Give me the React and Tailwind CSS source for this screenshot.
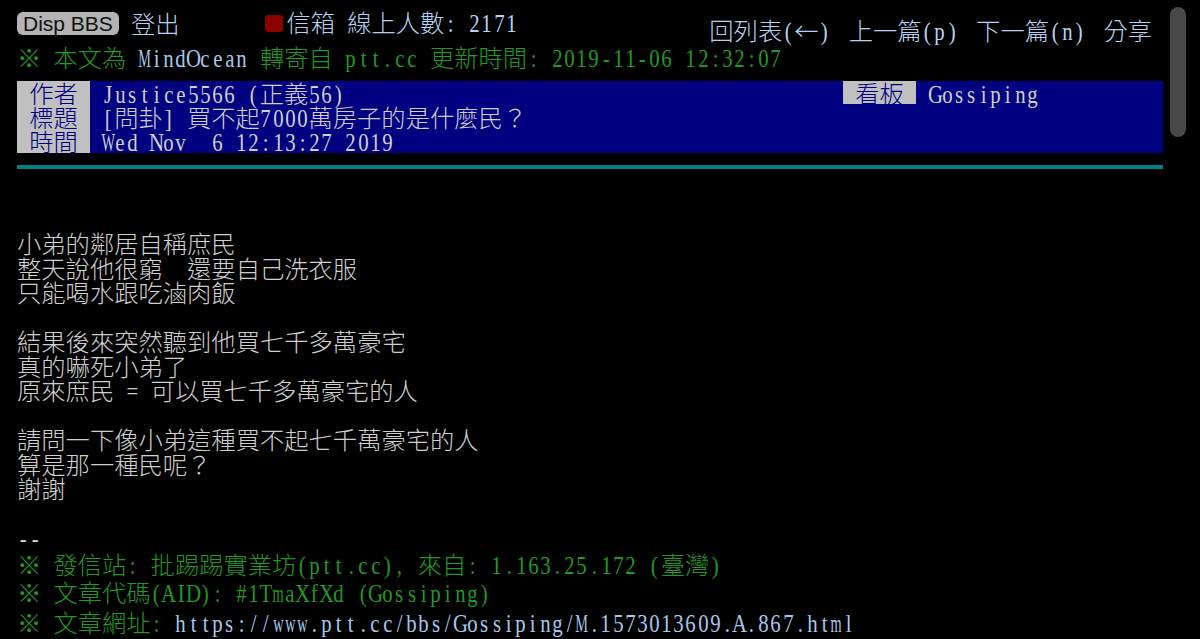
import React from 'react';

// terminal grid: half-width ascii cells are 12.15px, full-width cjk cells 24.3px
const WIDE = 'MWmw@%';

const Ch = ({ c }) => (
  <span className="inline-flex w-[12.15px] justify-center">
    {c === ' ' ? (
      '\u00a0'
    ) : (
      <span
        className={`inline-block font-['Liberation_Serif',serif] text-[26px] ${WIDE.includes(c) ? 'scale-x-[0.55]' : 'scale-x-[0.8]'}`}
      >
        {c}
      </span>
    )}
  </span>
);

const T = ({ children }) =>
  String(children)
    .split(/([\x00-\x7f]+)/)
    .filter(Boolean)
    .map((p, i) =>
      /^[\x00-\x7f]+$/.test(p) ? (
        <span key={i}>{[...p].map((c, j) => <Ch key={j} c={c} />)}</span>
      ) : (
        <span key={i}>{p}</span>
      )
    );

const Line = ({ children, className = 'h-[24.5px] leading-[24.5px]' }) => (
  <div className={`whitespace-pre ${className}`}>{children}</div>
);

const Label = ({ children }) => (
  <div className="h-[24px] w-[73px] shrink-0 bg-[#c0c0c0] text-center leading-[24px] text-[#000080]">{children}</div>
);

const BODY = [
  '小弟的鄰居自稱庶民',
  '整天說他很窮  還要自己洗衣服',
  '只能喝水跟吃滷肉飯',
  '',
  '結果後來突然聽到他買七千多萬豪宅',
  '真的嚇死小弟了',
  '原來庶民 = 可以買七千多萬豪宅的人',
  '',
  '請問一下像小弟這種買不起七千萬豪宅的人',
  '算是那一種民呢？',
  '謝謝',
  '',
  '--',
];

const NAV = ['回列表(←)', '上一篇(p)', '下一篇(n)', '分享'];

export default function App() {
  return (
    <div className="relative h-[639px] w-[1200px] overflow-hidden bg-black font-['Noto_Sans_CJK_TC',sans-serif] text-[24.3px] font-light text-[#cfcfcf]">
      <div className="absolute left-[1170px] top-[7px] h-[130px] w-[16px] rounded-full bg-[#484848]" />

      <div className="w-[1163px] pl-[17px]">
        <div className="flex h-[45px] justify-between">
          <div className="mt-[11px] flex h-[24px] items-center text-[#b4d2f0]">
            <div className="h-[23px] rounded-[6px] bg-[#b4b4b4] px-[6px] font-['Liberation_Sans',sans-serif] text-[21px] font-normal leading-[23px] text-[#111111]">
              Disp BBS
            </div>
            <span className="ml-[12px] leading-[24px]">登出</span>
            <span className="ml-[86px] h-[17px] w-[18px] rounded-[3px] bg-[#8b0000]" />
            <span className="ml-[3px] whitespace-pre leading-[24px]"><T>信箱 線上人數: 2171</T></span>
          </div>
          <div className="mr-[11px] mt-[18px] flex h-[24px] gap-[18px] leading-[24px] text-[#b4d2f0]">
            {NAV.map(n => (
              <span key={n} className="whitespace-pre"><T>{n}</T></span>
            ))}
          </div>
        </div>

        <div className="h-[24px] whitespace-pre leading-[24px] text-[#209a20]">
          <T>※ 本文為</T>
          <span className="text-[#a6c8ea]"><T>{' MindOcean '}</T></span>
          <T>轉寄自 ptt.cc 更新時間: 2019-11-06 12:32:07</T>
        </div>

        <div className="mt-[12px] bg-[#000080] text-[#d0d0d0]">
          <div className="flex h-[24px] leading-[24px]">
            <Label>作者</Label>
            <div className="ml-[12px] w-[741px] whitespace-pre"><T>Justice5566 (正義56)</T></div>
            <div className="h-[23px] w-[73px] bg-[#c0c0c0] text-center leading-[23px] text-[#000080]">看板</div>
            <div className="ml-[13px] whitespace-pre"><T>Gossiping</T></div>
          </div>
          <div className="flex h-[24px] leading-[24px]">
            <Label>標題</Label>
            <div className="ml-[12px] whitespace-pre"><T>[問卦] 買不起7000萬房子的是什麼民？</T></div>
          </div>
          <div className="flex h-[24px] leading-[24px]">
            <Label>時間</Label>
            <div className="ml-[12px] whitespace-pre"><T>Wed Nov  6 12:13:27 2019</T></div>
          </div>
        </div>

        <div className="mt-[12px] h-[4px] bg-[#008080]" />

        <div className="mt-[62px]">
          {BODY.map((l, i) => (
            <Line key={i}><T>{l || ' '}</T></Line>
          ))}
          <Line className="h-[28px] leading-[28px] text-[#209a20]">
            <T>※ 發信站: 批踢踢實業坊(ptt.cc), 來自: 1.163.25.172 (臺灣)</T>
          </Line>
          <Line className="h-[28px] leading-[28px] text-[#209a20]">
            <T>※ 文章代碼(AID): #1TmaXfXd (Gossiping)</T>
          </Line>
          <Line className="h-[32px] leading-[32px] text-[#209a20]">
            <T>※ 文章網址: </T>
            <span className="text-[#a6c8ea]"><T>https://www.ptt.cc/bbs/Gossiping/M.1573013609.A.867.html</T></span>
          </Line>
        </div>
      </div>
    </div>
  );
}
